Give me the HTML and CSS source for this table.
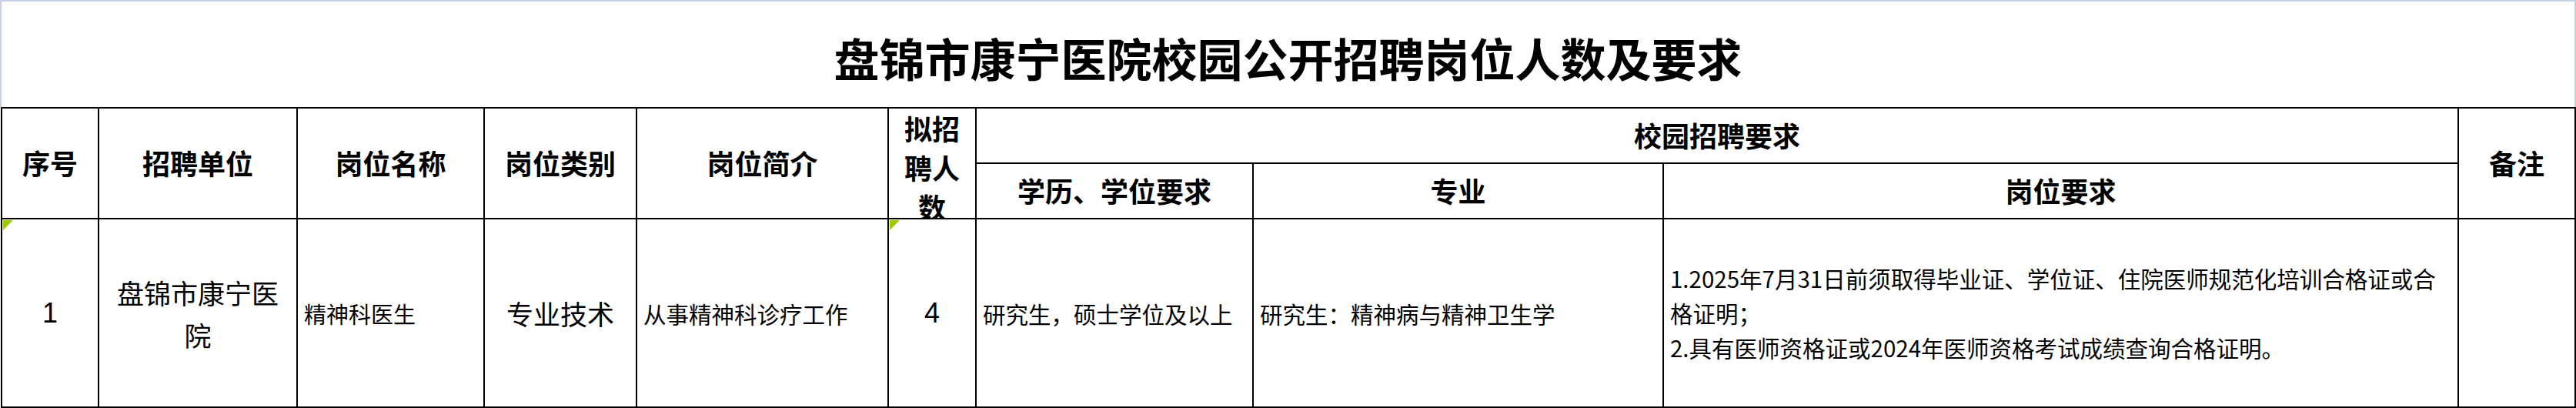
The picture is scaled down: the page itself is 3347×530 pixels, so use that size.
FILE: index.html
```html
<!DOCTYPE html>
<html lang="zh-CN">
<head>
<meta charset="utf-8">
<title>盘锦市康宁医院校园公开招聘岗位人数及要求</title>
<link rel="stylesheet" href="styles.css">
</head>
<body>
<div class="sheet">
  <div class="title">盘锦市康宁医院校园公开招聘岗位人数及要求</div>
  <table class="grid">
    <colgroup>
      <col class="c1"><col class="c2"><col class="c3"><col class="c4"><col class="c5">
      <col class="c6"><col class="c7"><col class="c8"><col class="c9"><col class="c10">
    </colgroup>
    <tr class="h1">
      <th rowspan="2">序号</th>
      <th rowspan="2">招聘单位</th>
      <th rowspan="2">岗位名称</th>
      <th rowspan="2">岗位类别</th>
      <th rowspan="2">岗位简介</th>
      <th rowspan="2" class="top"><div class="clip">拟招<br>聘人<br>数</div></th>
      <th colspan="3">校园招聘要求</th>
      <th rowspan="2">备注</th>
    </tr>
    <tr class="h2">
      <th>学历、学位要求</th>
      <th>专业</th>
      <th>岗位要求</th>
    </tr>
    <tr class="data">
      <td class="num"><span class="flag"></span>1</td>
      <td class="center big"><div class="unit">盘锦市康宁医<br>院</div></td>
      <td class="left small">精神科医生</td>
      <td class="center big">专业技术</td>
      <td class="left mid">从事精神科诊疗工作</td>
      <td class="num"><span class="flag"></span>4</td>
      <td class="left mid">研究生，硕士学位及以上</td>
      <td class="left mid">研究生：精神病与精神卫生学</td>
      <td class="left mid req">1.2025年7月31日前须取得毕业证、学位证、住院医师规范化培训合格证或合<br>格证明；<br>2.具有医师资格证或2024年医师资格考试成绩查询合格证明。</td>
      <td></td>
    </tr>
  </table>
</div>
</body>
</html>
```

FILE: styles.css
```css
html, body {
  margin: 0;
  padding: 0;
  background: #ffffff;
}

.sheet {
  width: 3347px;
  height: 530px;
  overflow: hidden;
  font-family: "Noto Sans CJK SC", "Noto Sans", sans-serif;
  color: #000;
}

.title {
  box-sizing: border-box;
  width: 3347px;
  height: 139px;
  border-top: 2px solid #c5d0e2;
  border-left: 2px solid #c5d0e2;
  border-right: 2px solid #c5d0e2;
  display: flex;
  align-items: center;
  justify-content: center;
  padding-top: 8px;
  font-size: 59px;
  font-weight: 700;
  line-height: 1;
}

.grid {
  border-collapse: collapse;
  table-layout: fixed;
  width: 3346px;
  margin-left: 1px;
  border: 2px solid #000;
}

.c1 { width: 126px; }
.c2 { width: 258px; }
.c3 { width: 243px; }
.c4 { width: 198px; }
.c5 { width: 327px; }
.c6 { width: 114px; }
.c7 { width: 360px; }
.c8 { width: 533px; }
.c9 { width: 1033px; }
.c10 { width: 152px; }

.grid th,
.grid td {
  border: 2px solid #000;
  padding: 0;
  overflow: hidden;
}

.grid th {
  font-size: 36px;
  font-weight: 700;
  text-align: center;
  vertical-align: middle;
  line-height: 1.2;
}

.h1 { height: 72px; }
.h2 { height: 72px; }
.data { height: 245px; }

.grid th.top {
  vertical-align: top;
}

.clip {
  height: 142px;
  overflow: hidden;
  line-height: 51px;
  padding-top: 0;
}

.grid td {
  position: relative;
  vertical-align: middle;
  font-weight: 400;
  white-space: nowrap;
}

.num {
  text-align: center;
  font-family: "Liberation Sans", Arial, sans-serif;
  font-size: 36px;
}

.center { text-align: center; }

.left {
  text-align: left;
  padding-left: 8px !important;
}

.big { font-size: 35px; }

.unit { line-height: 55px; }

.small { font-size: 29px; }

.mid { font-size: 29.5px; }

.req { line-height: 45px; }

.flag {
  position: absolute;
  left: 1px;
  top: 1px;
  width: 0;
  height: 0;
  border-top: 13px solid #99cc00;
  border-right: 13px solid transparent;
}
```
